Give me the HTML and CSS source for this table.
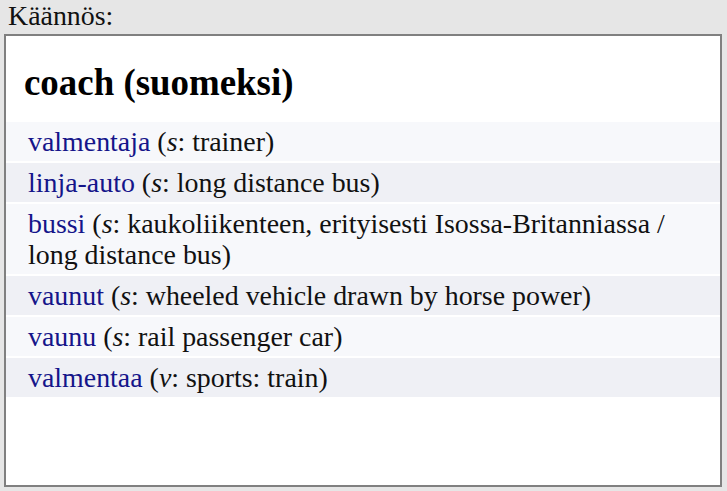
FILE: index.html
```html
<!DOCTYPE html>
<html lang="fi">
<head>
<meta charset="utf-8">
<title>Käännös</title>
<link rel="stylesheet" href="styles.css">
</head>
<body>
<div class="label">Käännös:</div>
<div class="box">
  <h2 class="title">coach (suomeksi)</h2>
  <ul class="list">
    <li class="row"><a class="word" href="#">valmentaja</a> (<i>s</i>: trainer)</li>
    <li class="row"><a class="word" href="#">linja-auto</a> (<i>s</i>: long distance bus)</li>
    <li class="row"><a class="word" href="#">bussi</a> (<i>s</i>: kaukoliikenteen, erityisesti Isossa-Britanniassa / long distance bus)</li>
    <li class="row"><a class="word" href="#">vaunut</a> (<i>s</i>: wheeled vehicle drawn by horse power)</li>
    <li class="row"><a class="word" href="#">vaunu</a> (<i>s</i>: rail passenger car)</li>
    <li class="row"><a class="word" href="#">valmentaa</a> (<i>v</i>: sports: train)</li>
  </ul>
</div>
</body>
</html>
```
FILE: styles.css
```css
html, body {
  margin: 0;
  padding: 0;
  background: #e6e6e6;
  height: 100%;
}
body {
  font-family: "Liberation Serif", "Times New Roman", serif;
  font-size: 27.9px;
  color: #111;
  display: flex;
  flex-direction: column;
  padding: 0 5px 4px 4px;
  box-sizing: border-box;
}
.label {
  padding-left: 4px;
  height: 34px;
  line-height: 32px;
  color: #111;
}
.box {
  flex: 1;
  background: #fff;
  border: 2px solid #808080;
  display: flex;
  flex-direction: column;
}
.title {
  margin: 26px 0 19px 18px;
  font-size: 36.9px;
  font-weight: bold;
  line-height: 41px;
  color: #000;
}
.list {
  list-style: none;
  margin: 0;
  padding: 0;
  display: flex;
  flex-direction: column;
  gap: 2px;
}
.row {
  padding: 4px 22px;
  line-height: 31px;
  background: #f7f8fb;
}
.row:nth-child(even) {
  background: #eff0f5;
}
.word {
  color: #15158a;
  text-decoration: none;
}
```
